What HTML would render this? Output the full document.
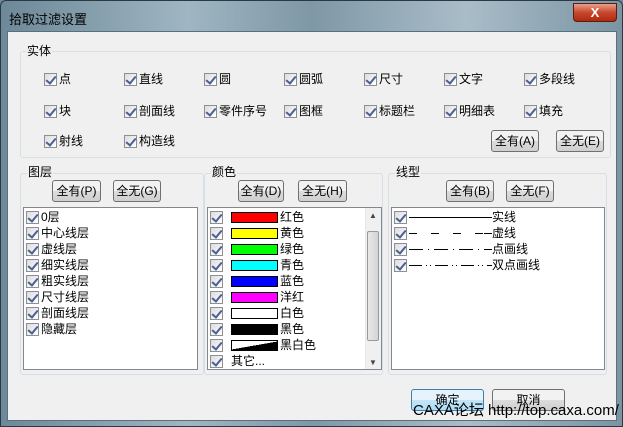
<!DOCTYPE html><html><head><meta charset="utf-8"><style>
*{margin:0;padding:0;box-sizing:border-box}
body{width:623px;height:427px;overflow:hidden;font:12px "Liberation Sans","Noto Sans CJK SC",sans-serif;background:#6f8a99;position:relative;color:#000}
.a{position:absolute}
.frame{left:0;top:0;width:623px;height:427px;background:linear-gradient(90deg,#6d8898,#9fb6c2 30%,#7f98a6 50%,#a9bdc8 75%,#7a94a2);border:1px solid #2a3a44;border-radius:6px 6px 0 0}
.client{left:7px;top:31px;width:610px;height:390px;background:#f0f0f0;border:1px solid #56707e}
.close{left:573px;top:3px;width:44px;height:19px;border:1px solid #5a1c10;border-radius:0 0 4px 4px;background:linear-gradient(#e8a08c,#c8482c 50%,#b02a10);color:#fff;font-weight:bold;text-align:center;font-size:13px;line-height:17px}
.grp{border:1px solid #d5dfe5;border-radius:3px}
.gt{background:#f0f0f0;padding:0 1px;line-height:13px}
.cb{display:inline-block;width:13px;height:13px;border:1px solid #8e8f8f;background:linear-gradient(135deg,#dcdcdc,#fff);vertical-align:middle;position:relative;margin-right:2px}
.cb:after{content:"";position:absolute;left:3px;top:0px;width:4px;height:8px;border:solid #4a5f97;border-width:0 2px 2px 0;transform:rotate(40deg)}
.it{position:absolute;white-space:nowrap;line-height:14px}
.btn{position:absolute;height:22px;border:1px solid #707070;border-radius:3px;background:linear-gradient(#f2f2f2 50%,#dddddd 50%,#cfcfcf);text-align:center;line-height:20px;font-size:12px}
.lb{position:absolute;background:#fff;border:1px solid #828790}
.row{position:absolute;left:2px;height:16px;line-height:16px;white-space:nowrap}
.sw{display:inline-block;width:47px;height:11px;border:1px solid #000;vertical-align:middle;margin:0 2px 0 6px}
.ln{display:inline-block;vertical-align:middle;width:83px;height:3px}
</style></head><body>
<div class="a frame"></div>
<div class="a" style="left:9px;top:9px;font-size:13px">拾取过滤设置</div>
<div class="a close">X</div>
<div class="a client"></div>

<div class="a grp" style="left:20px;top:51px;width:591px;height:107px"></div>
<div class="a gt" style="left:26px;top:45px">实体</div>
<div class="it" style="left:44px;top:72px"><span class="cb"></span>点</div>
<div class="it" style="left:124px;top:72px"><span class="cb"></span>直线</div>
<div class="it" style="left:204px;top:72px"><span class="cb"></span>圆</div>
<div class="it" style="left:284px;top:72px"><span class="cb"></span>圆弧</div>
<div class="it" style="left:364px;top:72px"><span class="cb"></span>尺寸</div>
<div class="it" style="left:444px;top:72px"><span class="cb"></span>文字</div>
<div class="it" style="left:524px;top:72px"><span class="cb"></span>多段线</div>
<div class="it" style="left:44px;top:104px"><span class="cb"></span>块</div>
<div class="it" style="left:124px;top:104px"><span class="cb"></span>剖面线</div>
<div class="it" style="left:204px;top:104px"><span class="cb"></span>零件序号</div>
<div class="it" style="left:284px;top:104px"><span class="cb"></span>图框</div>
<div class="it" style="left:364px;top:104px"><span class="cb"></span>标题栏</div>
<div class="it" style="left:444px;top:104px"><span class="cb"></span>明细表</div>
<div class="it" style="left:524px;top:104px"><span class="cb"></span>填充</div>
<div class="it" style="left:44px;top:134px"><span class="cb"></span>射线</div>
<div class="it" style="left:124px;top:134px"><span class="cb"></span>构造线</div>
<div class="btn" style="left:491px;top:130px;width:48px">全有(A)</div>
<div class="btn" style="left:556px;top:130px;width:48px">全无(E)</div>

<div class="a grp" style="left:20px;top:173px;width:184px;height:202px"></div>
<div class="a gt" style="left:27px;top:166px">图层</div>
<div class="btn" style="left:52px;top:180px;width:49px">全有(P)</div>
<div class="btn" style="left:113px;top:180px;width:48px">全无(G)</div>
<div class="lb" style="left:23px;top:207px;width:175px;height:163px">
<div class="row" style="top:1px"><span class="cb"></span>0层</div>
<div class="row" style="top:17px"><span class="cb"></span>中心线层</div>
<div class="row" style="top:33px"><span class="cb"></span>虚线层</div>
<div class="row" style="top:49px"><span class="cb"></span>细实线层</div>
<div class="row" style="top:65px"><span class="cb"></span>粗实线层</div>
<div class="row" style="top:81px"><span class="cb"></span>尺寸线层</div>
<div class="row" style="top:97px"><span class="cb"></span>剖面线层</div>
<div class="row" style="top:113px"><span class="cb"></span>隐藏层</div>
</div>

<div class="a grp" style="left:204px;top:173px;width:179px;height:202px"></div>
<div class="a gt" style="left:211px;top:166px">颜色</div>
<div class="btn" style="left:238px;top:180px;width:46px">全有(D)</div>
<div class="btn" style="left:298px;top:180px;width:49px">全无(H)</div>
<div class="lb" style="left:207px;top:207px;width:175px;height:163px">
<div class="row" style="top:1px"><span class="cb"></span><span class="sw" style="background:#f00"></span>红色</div>
<div class="row" style="top:17px"><span class="cb"></span><span class="sw" style="background:#ff0"></span>黄色</div>
<div class="row" style="top:33px"><span class="cb"></span><span class="sw" style="background:#0f0"></span>绿色</div>
<div class="row" style="top:49px"><span class="cb"></span><span class="sw" style="background:#0ff"></span>青色</div>
<div class="row" style="top:65px"><span class="cb"></span><span class="sw" style="background:#00f"></span>蓝色</div>
<div class="row" style="top:81px"><span class="cb"></span><span class="sw" style="background:#f0f"></span>洋红</div>
<div class="row" style="top:97px"><span class="cb"></span><span class="sw" style="background:#fff"></span>白色</div>
<div class="row" style="top:113px"><span class="cb"></span><span class="sw" style="background:#000"></span>黑色</div>
<div class="row" style="top:129px"><span class="cb"></span><span class="sw" style="background:linear-gradient(170deg,#fff 50%,#000 50%)"></span>黑白色</div>
<div class="row" style="top:145px"><span class="cb"></span><span style="margin-left:6px">其它...</span></div>
<div class="a" style="left:157px;top:0;width:16px;height:161px;background:#f0f0f0;border-left:1px solid #e8e8e8"></div>
<div class="a" style="left:161px;top:3px;font-size:8px;color:#444">▲</div>
<div class="a" style="left:159px;top:23px;width:12px;height:110px;border:1px solid #999;border-radius:2px;background:linear-gradient(90deg,#e8e8e8,#d4d4d4)"></div>
<div class="a" style="left:161px;top:150px;font-size:8px;color:#444">▼</div>
</div>

<div class="a grp" style="left:388px;top:173px;width:219px;height:202px"></div>
<div class="a gt" style="left:395px;top:166px">线型</div>
<div class="btn" style="left:446px;top:180px;width:48px">全有(B)</div>
<div class="btn" style="left:506px;top:180px;width:48px">全无(F)</div>
<div class="lb" style="left:391px;top:207px;width:214px;height:163px">
<div class="row" style="top:1px"><span class="cb"></span><svg class="ln"><line x1="0" y1="1.5" x2="83" y2="1.5" stroke="#000"/></svg>实线</div>
<div class="row" style="top:17px"><span class="cb"></span><svg class="ln"><line x1="0" y1="1.5" x2="83" y2="1.5" stroke="#000" stroke-dasharray="8 14"/><line x1="75" y1="1.5" x2="83" y2="1.5" stroke="#000"/></svg>虚线</div>
<div class="row" style="top:33px"><span class="cb"></span><svg class="ln"><line x1="0" y1="1.5" x2="83" y2="1.5" stroke="#000" stroke-dasharray="14 5 1 5"/></svg>点画线</div>
<div class="row" style="top:49px"><span class="cb"></span><svg class="ln"><line x1="0" y1="1.5" x2="83" y2="1.5" stroke="#000" stroke-dasharray="13 4 1 3 1 4"/></svg>双点画线</div>
</div>

<div class="btn" style="left:411px;top:389px;width:73px;border-color:#3c7fb1;background:linear-gradient(#e5f4fc 50%,#c4e5f6 50%,#aedcf4)">确定</div>
<div class="btn" style="left:492px;top:389px;width:73px">取消</div>
<div class="a" style="left:413px;top:402px;font-size:15px;line-height:18px;white-space:nowrap">CAXA论坛 http://top.caxa.com/</div>
</body></html>
